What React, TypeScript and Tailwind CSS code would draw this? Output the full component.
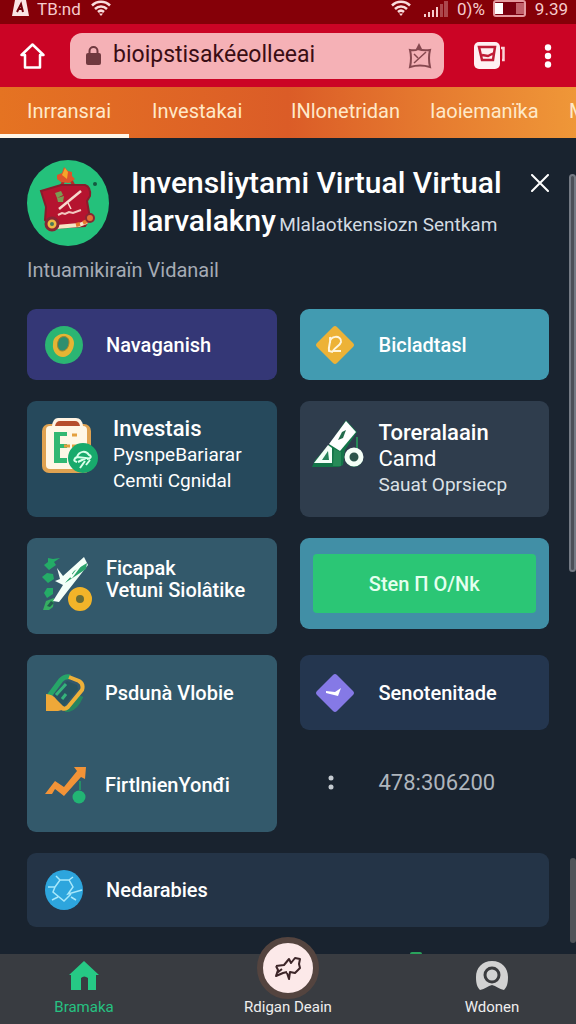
import type { ReactNode } from 'react'

const TABS = ['Inrransrai', 'Investakai', 'INlonetridan', 'Iaoiemanïka', 'M']

function WifiIcon() {
  return (
    <svg width="20" height="17" viewBox="0 0 20 17" fill="none" stroke="#fbdcdc" strokeWidth="2.500">
      <path d="M1 5.500C6 .5 14 .5 19 5.500M4 9c3.500-3.500 8.500-3.500 12 0M7 12c2-1.800 4-1.800 6 0" />
      <path d="M8 13.500h4L10 16z" fill="#fbdcdc" stroke="none" />
    </svg>
  )
}

function StatusBar() {
  return (
    <div className="flex h-6 items-start justify-between bg-[#850008] pl-3 pr-2 text-[17px] leading-[19px] text-[#f6cccc]">
      <div className="flex items-start gap-2">
        <svg width="17" height="17" viewBox="0 0 17 17">
          <path d="M3 0h11l3 16H0z" fill="#fbe4e4" />
          <path d="m5 12 4-8 2 8M7 9h3" fill="none" stroke="#70000a" strokeWidth="2" />
        </svg>
        <span className="w-[46px] whitespace-nowrap">TB:nd</span>
        <WifiIcon />
      </div>
      <div className="flex items-start gap-2">
        <WifiIcon />
        <svg width="26" height="17" viewBox="0 0 26 17" fill="#f6cccc" className="ml-1">
          <path d="M1 14h2v3H1zM5 12h2v5H5zM9 10h2v7H9zM13 7h2v10h-2z" />
          <path d="M17 4h3v13h-3zM21 1h4v16h-4z" opacity=".35" />
        </svg>
        <span>0)%</span>
        <svg width="34" height="17" viewBox="0 0 34 17">
          <rect x="1" y="1" width="31" height="15" rx="2" fill="#7a0010" stroke="#e59a9f" strokeWidth="2" />
          <path d="M2 3h8v11H2z" fill="#fff" />
          <path d="M23 3h8v11h-8z" fill="#c2616a" />
        </svg>
        <span>9.39</span>
      </div>
    </div>
  )
}

function BrowserBar() {
  return (
    <div className="flex h-[63px] items-center bg-[#cb0425] pl-5 pr-4">
      <button aria-label="Home">
        <svg width="25" height="26" viewBox="0 0 25 26" fill="none" stroke="#fff" strokeWidth="2.500" strokeLinejoin="round" strokeLinecap="round">
          <path d="M12.500 1.500 1.500 12H5v12.500h15V12h3.500z" />
        </svg>
      </button>
      <div className="ml-[25px] flex h-[46px] min-w-0 flex-1 items-center rounded-xl bg-[#f5b1b6] pl-4 pr-3">
        <svg width="15" height="20" viewBox="0 0 15 20">
          <path d="M3.500 8V5a4 4 0 0 1 8 0v3" fill="none" stroke="#70393f" strokeWidth="2" />
          <rect y="7" width="15" height="12" rx="2" fill="#70393f" />
        </svg>
        <input
          aria-label="Address"
          defaultValue="bioipstisakéeolleeai"
          className="ml-3 min-w-0 flex-1 bg-transparent text-[23px] text-[#3a0d14] outline-none"
        />
        <button aria-label="Bookmark">
          <svg width="24" height="26" viewBox="0 0 24 26" fill="none" stroke="#86484f" strokeWidth="2">
            <path d="M2 7q5 1 8-1 5 2 12 1-2 8 0 17-10-3-20 0 2-9 0-17z" />
            <path d="M6 20 18 9M6 11l4 4" strokeWidth="1.500" />
            <path d="m8 6 3-6 3 6z" fill="#86484f" stroke="none" />
          </svg>
        </button>
      </div>
      <button aria-label="Open tabs" className="ml-[30px]">
        <svg width="32" height="28" viewBox="0 0 32 28">
          <rect width="26" height="27" rx="5" fill="#fff0f2" />
          <path d="M5 5h16l-2 13H8zM8 13l6 1 6-3" fill="none" stroke="#c01c36" strokeWidth="2.500" />
          <path d="M27 6h2.500v12H28" fill="none" stroke="#fbd3d8" strokeWidth="2.500" />
        </svg>
      </button>
      <button aria-label="Menu" className="ml-[38px] mr-2">
        <svg width="8" height="24" viewBox="0 0 8 24" fill="#fff">
          <circle cx="4" cy="3.500" r="3.200" />
          <circle cx="4" cy="12" r="3.200" />
          <circle cx="4" cy="20.500" r="3.200" />
        </svg>
      </button>
    </div>
  )
}

function Card({ icon, className, children }: { icon: ReactNode; className: string; children: ReactNode }) {
  return (
    <button className={`flex w-full rounded-[9px] text-left text-white ${className}`}>
      {icon}
      <div className="whitespace-nowrap">{children}</div>
    </button>
  )
}

function MascotIcon() {
  return (
    <svg width="82" height="86" viewBox="0 0 82 86" className="shrink-0">
      <ellipse cx="41" cy="43" rx="41" ry="43" fill="#24c17b" />
      <path d="m34 27 3-7h7l3 6" fill="none" stroke="#b52b27" strokeWidth="3" />
      <path d="m30 15 5-2 2-6 4 4 4 1v4l3 3-6 4-8-1-4-3z" fill="#dd542b" />
      <path d="m35 15 3-7 3 4-1 7z" fill="#f5a52a" />
      <path d="m14 31 20-6 24 0q6 2 5 11l-3 5 3 17-5 8-32 2-8-8 1-13z" fill="#b5142f" stroke="#8a1c2c" strokeWidth="2" />
      <path d="m28 33 6-2 2 4-6 3zM30 38l7-2-1 6h-5z" fill="#7a9c53" />
      <path d="M32 49 54 31" stroke="#f7d9cc" strokeWidth="2.500" />
      <path d="m41 43 3 6" stroke="#f7d9cc" strokeWidth="1.500" />
      <path d="m31 55 4-2 3 1 4-2 4 1 8-3" fill="none" stroke="#f3c8c0" strokeWidth="2" />
      <path d="m29 67 23-2 8-3" stroke="#f7e4c4" strokeWidth="4" />
      <path d="m49 65 4-1M56 63l4-2" stroke="#e7772d" strokeWidth="4" />
      <circle cx="25" cy="64" r="6" fill="#eeb943" stroke="#872634" strokeWidth="3" />
      <circle cx="25" cy="64" r="2" fill="#49775a" />
      <circle cx="63" cy="58" r="4" fill="#e16e35" stroke="#872634" strokeWidth="2" />
      <circle cx="68" cy="24" r="2" fill="#155940" />
    </svg>
  )
}

function RingIcon() {
  return (
    <svg width="38" height="38" viewBox="0 0 38 38">
      <circle cx="19" cy="19" r="19" fill="#2bb573" />
      <path d="M12 10c7-5 17-1 17 7 0 7-5 14-11 14S7 25 8 18c0-4 1-6 4-8z" fill="#e5b534" />
      <path d="M15 12c4-3 9-1 9 4 0 5-3 9-7 9-5 0-6-9-2-13z" fill="#2d8f6f" stroke="#a5842b" />
    </svg>
  )
}

function DiamondIcon() {
  return (
    <svg width="40" height="40" viewBox="0 0 40 40">
      <path d="M18 2q2-2 4 0l16 16q2 2 0 4L22 38q-2 2-4 0L2 22q-2-2 0-4z" fill="#edb236" />
      <path d="M15 18c-1-8 12-8 11-1-1 4-6 5-8 9h8M15 12c1 7-2 9-1 14l4 1" fill="none" stroke="#fff5dc" strokeWidth="2" />
    </svg>
  )
}

function ClipboardIcon() {
  return (
    <svg width="56" height="56" viewBox="0 0 56 56">
      <rect y="6" width="49" height="49" rx="7" fill="#dfa251" />
      <rect x="4" y="8" width="41" height="43" rx="4" fill="#fff7e6" />
      <path d="M10 8q1-8 6-8h18q6 0 7 8z" fill="#fff3e2" />
      <path d="M13 8q1-5 5-5h15q4 0 5 5z" fill="#b54e2d" />
      <path d="M12 14h13v4h-7v8h7v4h-7v10h7v5H12z" fill="#32b873" />
      <path d="M30 17h5M22 28h6M30 28h5" stroke="#e3a03f" strokeWidth="3" />
      <circle cx="41" cy="40" r="15" fill="#18aa6c" />
      <path d="M35 44c-5-1-2-4 0-5 2-6 9-7 12-2 3 1 2 4-2 4M35 39l9 1-8 4M43 43l-5 7M48 42l-4 5" fill="none" stroke="#d9ffea" strokeWidth="2" />
    </svg>
  )
}

function ShapesIcon() {
  return (
    <svg width="52" height="48" viewBox="0 0 52 48">
      <path d="m34 0 11 12-12 18-2 15-4 2H0l3-7 14-15z" fill="#137448" />
      <path d="m34 1 10 11-16 19-11-7z" fill="#fff" />
      <path d="m26 20 4-8 4-2-3 8z" fill="#236b4c" />
      <path d="m16 25 4 3v15H2z" fill="#f4fff7" />
      <path d="m10 40 6-9 1 9z" fill="#25835a" />
      <path d="m22 29 7 3v14h-8z" fill="#278b58" />
      <path d="M45 17v12" stroke="#278b58" strokeWidth="2" />
      <circle cx="42" cy="38" r="9" fill="#137448" />
      <circle cx="42" cy="37" r="7" fill="#2b554a" stroke="#f4fff7" strokeWidth="5" />
    </svg>
  )
}

function PercentIcon() {
  return (
    <svg width="52" height="54" viewBox="0 0 52 54">
      <path d="M6 1v4L2 8l5 5 7-5-2-3 6-4-7 1zM5 16l-5 4 6 6 6-4-1-5zM5 31l-3 5 3 5 6-4V31z" fill="#24ac67" />
      <path d="m1 53 3-9 8-3-1 9-4 3z" fill="#36ae62" />
      <path d="m5 49 4-5 3 2-4 4z" fill="#225c4d" />
      <path d="m42 0 4 8-29 37-6-1 10-16-8-4 5-2-3-11 6 8z" fill="#f4fff8" />
      <path d="m45 6-1 6-12 8-9 6 9-12z" fill="#2aa26b" />
      <path d="m30 17-9 9M38 9l-9 12" stroke="#f4fff8" strokeWidth="2" />
      <circle cx="38" cy="42" r="8" fill="#686d38" stroke="#f2b429" strokeWidth="8" />
    </svg>
  )
}

function TagIcon() {
  return (
    <svg width="40" height="38" viewBox="0 0 40 38" fill="none">
      <path d="M4 22 16 6q4-4 9-3" stroke="#26a568" strokeWidth="5" />
      <path d="M20 36q10 0 16-14" stroke="#26855f" strokeWidth="5" />
      <path d="m24 3 10 4q5 3 3 9L23 33q-3 3-6 1" stroke="#eeb039" strokeWidth="4" />
      <path d="m9 20 13-13 10 4 1 4-14 17-8-5z" fill="#285461" />
      <path d="m11 21 10-11M17 25l4-5" stroke="#35b37a" strokeWidth="3" />
      <path d="M1 20q7 0 11 6l8 8q-3 3-7 3H1z" fill="#eea839" />
    </svg>
  )
}

function TrendIcon() {
  return (
    <svg width="42" height="38" viewBox="0 0 42 38">
      <path d="M35 15v9" stroke="#268e67" strokeWidth="2" />
      <circle cx="34" cy="31" r="6.500" fill="#22b574" />
      <path d="m0 28 10-13 9 6L32 5l-3-4h12l-1 12-4-2-17 19-9-7-3 5z" fill="#f29337" />
    </svg>
  )
}

function CheckDiamondIcon() {
  return (
    <svg width="40" height="40" viewBox="0 0 40 40">
      <path d="M18 2q2-2 4 0l16 16q2 2 0 4L22 38q-2 2-4 0L2 22q-2-2 0-4z" fill="#8579e6" />
      <path d="m11 18 9 1 6-4-3 8-12-3z" fill="#fff" />
    </svg>
  )
}

function GlobeIcon() {
  return (
    <svg width="38" height="40" viewBox="0 0 38 40">
      <ellipse cx="19" cy="20" rx="19" ry="20" fill="#2da5dd" />
      <path d="M3 17h7l5-7h9l4 7-5 7 14-4M10 17l-2 5 11 9 7-7M11 6l4 4M7 30l6-3M31 30l-5-3M24 10l4-3" fill="none" stroke="#a7e8fb" strokeWidth="1.500" />
    </svg>
  )
}

function BottomNav() {
  return (
    <nav className="relative flex h-[70px] justify-between bg-[#393c41] px-5 text-[15px] leading-[18px] text-[#eeeeee]">
      <span className="absolute -top-0.5 left-[410px] h-0.5 w-3 rounded-t-full bg-[#2aa35c]" />
      <button className="flex w-32 flex-col items-center pt-[7px] text-[#26c281]">
        <svg width="30" height="30" viewBox="0 0 30 30" fill="#26c985">
          <path d="M15 0 30 14h-3v15h-8V17q-4-3-7 0v12H2V14H0z" />
        </svg>
        <span className="mt-[7px]">Bramaka</span>
      </button>
      <button className="relative flex w-32 flex-col items-center pt-11">
        <span className="absolute -top-[17px] flex size-[62px] items-center justify-center rounded-full border-[6px] border-[#54443f] bg-[#fce9e9]">
          <svg width="30" height="30" viewBox="0 0 30 30" fill="none" stroke="#3c2528" strokeWidth="2" strokeLinejoin="round">
            <path d="m3 13 8-1 5-6 2 4 4-5 5 1-1 5 1 4-5 5-5-1-1 7-2-6M3 13l2 4-2 6 7-3 4-1M4 20l5-4" />
          </svg>
        </span>
        <span>Rdigan Deain</span>
      </button>
      <button className="flex w-32 flex-col items-center pt-[7px]">
        <svg width="32" height="30" viewBox="0 0 32 30">
          <path d="M16 0c10 0 16 7 16 16 0 6-1 10-4 13-5-1-8-4-12-5-4 1-7 4-12 5-3-3-4-7-4-13C0 7 6 0 16 0z" fill="#d2d2d2" />
          <circle cx="16" cy="14" r="7" fill="#d2d2d2" stroke="#3a3b3e" strokeWidth="3" />
        </svg>
        <span className="mt-[7px]">Wdonen</span>
      </button>
    </nav>
  )
}

export default function App() {
  return (
    <div className="relative flex min-h-screen flex-col overflow-hidden bg-[#19232f] font-['Roboto',sans-serif]">
      <StatusBar />
      <BrowserBar />

      <nav className="flex h-[51px] overflow-hidden whitespace-nowrap bg-linear-to-r from-[#e57322] via-[#db5c27] to-[#ef9738] text-xl text-[#ffe9c9]">
        {TABS.map((tab, i) => (
          <a
            key={tab}
            href="#"
            className={`flex shrink-0 items-center border-b-4 ${i === 0 ? 'w-[129px] border-[#fff6e8] pl-[27px]' : 'w-[139px] border-transparent pl-[23px]'}`}
          >
            {tab}
          </a>
        ))}
      </nav>

      <main className="flex-1 px-[27px] pb-[27px] pt-[22px]">
        <header className="flex items-start">
          <MascotIcon />
          <h1 className="ml-[22px] min-w-0 flex-1 whitespace-nowrap pt-1 text-[30px] font-medium leading-[38px] text-white">
            Invensliytami Virtual Virtual
            <br />
            Ilarvalakny <span className="-ml-1 text-[19px] font-normal text-[#d3dbe2]">Mlalaotkensiozn Sentkam</span>
          </h1>
          <button aria-label="Close" className="pt-3.5">
            <svg width="18" height="18" viewBox="0 0 18 18" stroke="#fff" strokeWidth="2" strokeLinecap="round">
              <path d="m1 1 16 16M17 1 1 17" />
            </svg>
          </button>
        </header>
        <p className="mt-3 text-xl leading-6 text-[#a5abb5]">Intuamikiraïn Vidanail</p>

        <div className="mt-[27px] grid grid-cols-2 gap-x-[23px] gap-y-[21px] text-xl font-medium">
          <div className="flex flex-col gap-[21px]">
            <Card icon={<RingIcon />} className="h-[71px] items-center gap-[23px] bg-[#343776] pl-[18px]">
              Navaganish
            </Card>
            <Card icon={<ClipboardIcon />} className="h-[116px] gap-[15px] bg-[#26495c] pl-[15px] pt-[17px]">
              <p className="-mt-0.5 text-[22px] leading-[26px]">Investais</p>
              <p className="text-[19px] font-normal leading-[26px]">PysnpeBariarar</p>
              <p className="text-[19px] font-normal leading-[26px]">Cemti Cgnidal</p>
            </Card>
            <Card icon={<PercentIcon />} className="h-24 gap-3 bg-[#33596b] pl-[15px] pt-[19px]">
              <p className="leading-[22px]">Ficapak</p>
              <p className="leading-[22px]">Vetuni Siolâtike</p>
            </Card>
            <div className="h-[177px] rounded-[9px] bg-[#33596b]">
              <Card icon={<TagIcon />} className="h-[75px] items-center gap-5 pl-[18px]">
                Psdunà Vlobie
              </Card>
              <Card icon={<TrendIcon />} className="mt-[17px] h-[75px] items-center gap-[18px] pl-[18px]">
                FirtlnienYonđi
              </Card>
            </div>
          </div>

          <div className="flex flex-col gap-[21px]">
            <Card icon={<DiamondIcon />} className="h-[71px] items-center gap-6 bg-[#429bb1] pl-[15px]">
              Bicladtasl
            </Card>
            <Card icon={<ShapesIcon />} className="h-[116px] gap-[15px] bg-[#2f3d4d] pl-3 pt-[19px]">
              <p className="text-[22px] leading-[26px]">Toreralaain</p>
              <p className="text-[22px] font-normal leading-[26px]">Camd</p>
              <p className="text-[19px] font-normal leading-[26px] text-[#dbe1e6]">Sauat Oprsiecp</p>
            </Card>
            <div className="h-[91px] rounded-[9px] bg-[#418fa6] px-[13px] py-4">
              <button className="h-full w-full rounded bg-[#2bc675] text-[#e5ffef]">Sten Π O/Nk</button>
            </div>
            <Card icon={<CheckDiamondIcon />} className="mt-[5px] h-[75px] items-center gap-6 bg-[#24364f] pl-[15px]">
              Senotenitade
            </Card>
            <div className="flex h-16 items-center gap-[45px] pl-7 text-[22px] font-normal text-[#aeb5bd]">
              <svg width="6" height="16" viewBox="0 0 6 16" fill="#c5cbd1">
                <circle cx="3" cy="3" r="2.500" />
                <circle cx="3" cy="12" r="2.500" />
              </svg>
              <span>478:306200</span>
            </div>
          </div>

          <Card icon={<GlobeIcon />} className="col-span-2 h-[74px] items-center gap-[23px] bg-[#243447] pl-[18px]">
            Nedarabies
          </Card>
        </div>
      </main>

      <BottomNav />

      <div className="absolute right-0 top-[174px] h-[398px] w-[7px] rounded-full border-2 border-[#747a84] bg-[#4c5058]" />
      <div className="absolute right-0 top-[858px] h-[85px] w-1.5 rounded-full bg-[#505459]" />
    </div>
  )
}
